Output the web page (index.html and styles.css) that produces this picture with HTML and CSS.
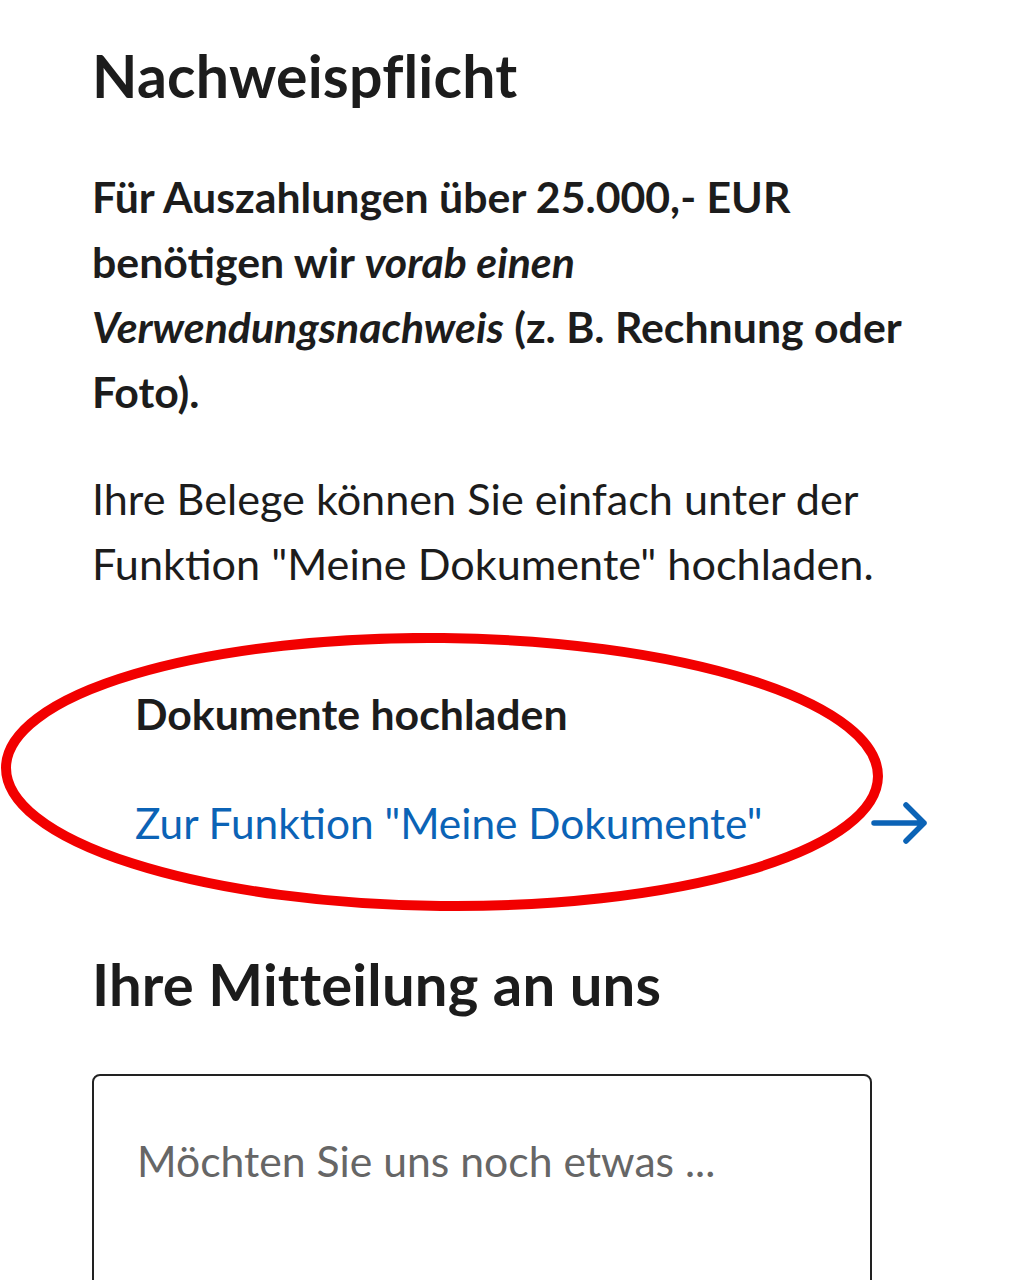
FILE: index.html
```
<!DOCTYPE html>
<html lang="de">
<head>
<meta charset="utf-8">
<link rel="stylesheet" href="styles.css">
</head>
<body>
<main class="page">
  <h1 class="title">Nachweispflicht</h1>
  <p class="lead">Für Auszahlungen über 25.000,- EUR benötigen wir <em>vorab einen</em> <em>Verwendungsnachweis</em> (z. B. Rechnung oder Foto).</p>
  <p class="text">Ihre Belege können Sie einfach unter der Funktion "Meine Dokumente" hochladen.</p>
  <section class="upload">
    <h2 class="upload-title">Dokumente hochladen</h2>
    <a class="upload-link" href="#">
      <span>Zur Funktion "Meine Dokumente"</span>
      <svg class="arrow" viewBox="0 0 60 44" width="60" height="44" aria-hidden="true"><path d="M4 22H54M36 4L54 22L36 40" fill="none" stroke="#0b63b6" stroke-width="5.5" stroke-linecap="round" stroke-linejoin="round"/></svg>
    </a>
    <svg class="circle" viewBox="0 0 890 284" width="890" height="284" aria-hidden="true"><ellipse cx="442" cy="139" rx="436" ry="134" fill="none" stroke="#f20000" stroke-width="10" transform="rotate(0.6 442 139)"/></svg>
  </section>
  <h1 class="title title-2">Ihre Mitteilung an uns</h1>
  <div class="box"><span class="placeholder">Möchten Sie uns noch etwas ...</span></div>
</main>
</body>
</html>
```
FILE: styles.css
```
html, body { margin: 0; padding: 0; background: #fff; }
body { font-family: Lato, "Noto Sans", sans-serif; color: #1c1c1c; overflow: hidden; height: 1280px; }
.page { padding: 40px 70px 0 92px; }
.title { font-size: 59px; font-weight: 700; margin: 0; line-height: 72px; letter-spacing: 0.2px; }
.lead { font-size: 42.8px; font-weight: 700; line-height: 65px; margin: 52px 0 0; }
.lead em { font-style: italic; }
.text { font-size: 43.2px; font-weight: 400; line-height: 65px; margin: 42px 0 0; }
.upload { position: relative; margin-top: 93px; padding-left: 43px; }
.upload-title { font-size: 42.8px; font-weight: 700; margin: 0; line-height: 50px; }
.upload-link { display: flex; align-items: center; justify-content: space-between; margin-top: 59px; margin-right: 12px; color: #0b63b6; text-decoration: none; font-size: 42.4px; line-height: 50px; }
.arrow { display: block; }
.circle { position: absolute; left: -92px; top: -56px; pointer-events: none; }
.title-2 { font-size: 58px; margin-top: 100px; }
.box { margin-top: 54px; width: 780px; height: 260px; border: 2px solid #222; border-radius: 8px; box-sizing: border-box; padding: 60px 0 0 43px; }
.placeholder { font-size: 42.7px; color: #666; line-height: 50px; }
```
